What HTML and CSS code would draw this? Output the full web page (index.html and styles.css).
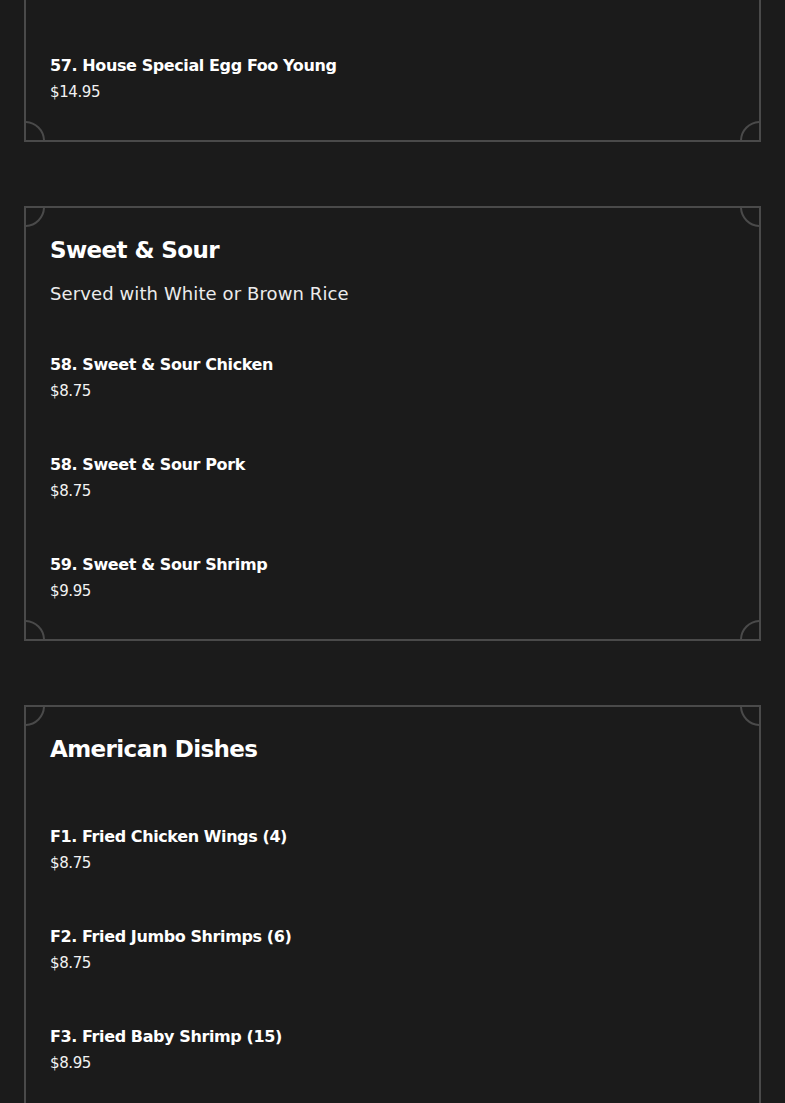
FILE: index.html
```html
<!DOCTYPE html>
<html lang="en">
<head>
<meta charset="utf-8">
<title>Menu</title>
<link rel="stylesheet" href="styles.css">
</head>
<body>
<main class="menu">
  <section class="card card-first">
    <span class="corner tl"></span><span class="corner tr"></span><span class="corner bl"></span><span class="corner br"></span>
    <div class="items">
      <div class="item"><div class="item-name">56. Shrimp Egg Foo Young</div><div class="item-price">$10.95</div></div>
      <div class="item"><div class="item-name">57. House Special Egg Foo Young</div><div class="item-price">$14.95</div></div>
    </div>
  </section>

  <section class="card">
    <span class="corner tl"></span><span class="corner tr"></span><span class="corner bl"></span><span class="corner br"></span>
    <h2 class="card-title">Sweet &amp; Sour</h2>
    <p class="card-desc">Served with White or Brown Rice</p>
    <div class="items">
      <div class="item"><div class="item-name">58. Sweet &amp; Sour Chicken</div><div class="item-price">$8.75</div></div>
      <div class="item"><div class="item-name">58. Sweet &amp; Sour Pork</div><div class="item-price">$8.75</div></div>
      <div class="item"><div class="item-name">59. Sweet &amp; Sour Shrimp</div><div class="item-price">$9.95</div></div>
    </div>
  </section>

  <section class="card">
    <span class="corner tl"></span><span class="corner tr"></span><span class="corner bl"></span><span class="corner br"></span>
    <h2 class="card-title">American Dishes</h2>
    <p class="card-desc card-desc-empty"></p>
    <div class="items">
      <div class="item"><div class="item-name">F1. Fried Chicken Wings (4)</div><div class="item-price">$8.75</div></div>
      <div class="item"><div class="item-name">F2. Fried Jumbo Shrimps (6)</div><div class="item-price">$8.75</div></div>
      <div class="item"><div class="item-name">F3. Fried Baby Shrimp (15)</div><div class="item-price">$8.95</div></div>
      <div class="item"><div class="item-name">F4. French Fries</div><div class="item-price">$4.25</div></div>
    </div>
  </section>
</main>
</body>
</html>
```

FILE: styles.css
```css
html, body {
  margin: 0;
  padding: 0;
  background: #1b1b1b;
}
body {
  font-family: "DejaVu Sans", "Noto Sans", sans-serif;
  color: #ffffff;
  overflow: hidden;
}
.menu {
  display: flex;
  flex-direction: column;
  gap: 64px;
  padding: 0 24px;
  margin-top: -75px;
}
.card {
  position: relative;
  overflow: hidden;
  display: flex;
  flex-direction: column;
  border: 2px solid #4a4a4a;
  background: #1b1b1b;
  padding: 26px 24px 35px 24px;
}
.corner {
  position: absolute;
  width: 40px;
  height: 40px;
  box-sizing: border-box;
  border: 2px solid #4a4a4a;
  border-radius: 50%;
  background: #1b1b1b;
}
.corner.tl { left: -21px; top: -21px; }
.corner.tr { right: -21px; top: -21px; }
.corner.bl { left: -21px; bottom: -21px; }
.corner.br { right: -21px; bottom: -21px; }
.card-title {
  margin: 0 0 14px 0;
  font-size: 23px;
  line-height: 32px;
  font-weight: 600;
  letter-spacing: -0.6px;
  color: #ffffff;
}
.card-desc {
  margin: 0 0 44px 0;
  font-size: 18px;
  line-height: 28px;
  letter-spacing: 0.1px;
  color: #ececec;
}
.card-desc-empty {
  margin-bottom: 45px;
}
.items {
  display: flex;
  flex-direction: column;
  gap: 48px;
}
.item-name {
  font-size: 16px;
  line-height: 26px;
  font-weight: 700;
  letter-spacing: -0.4px;
  color: #ffffff;
}
.item-price {
  font-size: 15px;
  line-height: 26px;
  letter-spacing: -0.4px;
  color: #f2f2f2;
}
```
